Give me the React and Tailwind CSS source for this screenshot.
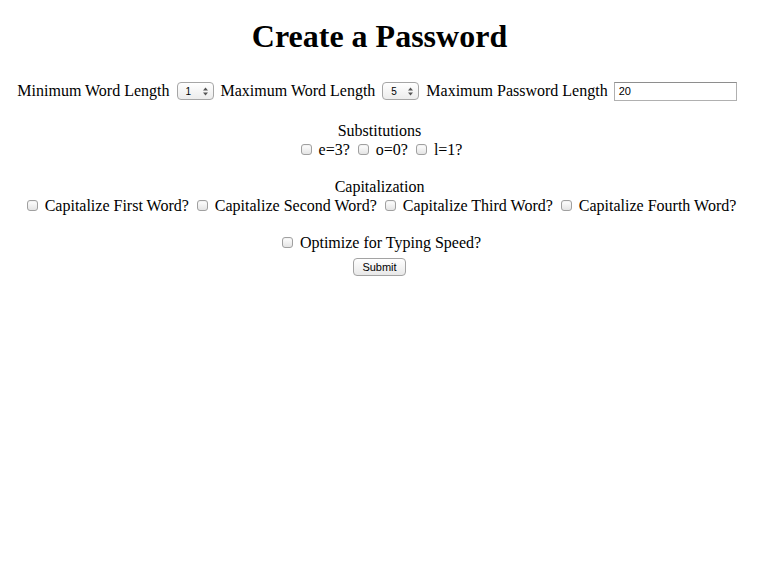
import React from 'react';

const serif = { fontFamily: '"Liberation Serif", "Times New Roman", serif' };

const Box = () => (
  <span className="inline-block w-[11px] h-[11px] ml-[4px] mr-[7px] rounded-[3px] border border-[#a0a0a0] bg-gradient-to-b from-white to-[#e4e4e4] shadow-[inset_0_1px_1px_rgba(0,0,0,0.05)]" />
);

const Check = ({ label }) => (
  <span className="inline-flex items-center whitespace-nowrap">
    <Box />
    <span>{label}</span>
  </span>
);

const Select = ({ value }) => (
  <span className="inline-flex items-center justify-between w-[37px] h-[18px] mx-[3px] pl-[8px] pr-[5px] rounded-[4px] border border-[#a6a6a6] bg-gradient-to-b from-white to-[#ececec] font-['Liberation_Sans',Arial,sans-serif] text-[10px] text-black">
    <span>{value}</span>
    <svg width="5" height="9" viewBox="0 0 5 9" className="fill-[#555]">
      <path d="M2.5 0.5L5 3.5H0z" />
      <path d="M2.5 8.5L5 5.5H0z" />
    </svg>
  </span>
);

export default function App() {
  return (
    <div className="min-h-[561px] bg-white text-black text-[16px] text-center px-2" style={serif}>
      <h1 className="text-[32px] font-bold leading-[37px] pt-[18px] pb-[21px]">Create a Password</h1>

      <div className="flex justify-center items-center whitespace-nowrap h-[22px] mt-[4px] -ml-[3px]">
        <span>Minimum Word Length</span>
        <span className="w-[4px]" />
        <Select value="1" />
        <span className="w-[4px]" />
        <span>Maximum Word Length</span>
        <span className="w-[4px]" />
        <Select value="5" />
        <span className="w-[4px]" />
        <span>Maximum Password Length</span>
        <span className="w-[4px]" />
        <span className="inline-flex items-center w-[123px] h-[19px] mx-[2px] pl-[4px] border border-[#b0b0b0] border-t-[#8e8e8e] bg-white font-['Liberation_Sans',Arial,sans-serif] text-[11px] text-left">
          20
        </span>
      </div>

      <div className="mt-[19px] leading-[19px]">
        <div>Substitutions</div>
        <div className="flex justify-center items-center gap-[4px]">
          <Check label="e=3?" />
          <Check label="o=0?" />
          <Check label="l=1?" />
        </div>
      </div>

      <div className="mt-[18px] leading-[19px]">
        <div>Capitalization</div>
        <div className="flex justify-center items-center gap-[4px]">
          <Check label="Capitalize First Word?" />
          <Check label="Capitalize Second Word?" />
          <Check label="Capitalize Third Word?" />
          <Check label="Capitalize Fourth Word?" />
        </div>
      </div>

      <div className="mt-[18px] leading-[19px]">
        <div className="flex justify-center items-center">
          <Check label="Optimize for Typing Speed?" />
        </div>
        <div className="flex justify-center mt-[6px]">
          <button className="h-[18px] px-[8px] rounded-[4px] border border-[#a3a3a3] bg-gradient-to-b from-white to-[#e8e8e8] font-['Liberation_Sans',Arial,sans-serif] text-[11px] leading-[16px] text-black">
            Submit
          </button>
        </div>
      </div>
    </div>
  );
}
